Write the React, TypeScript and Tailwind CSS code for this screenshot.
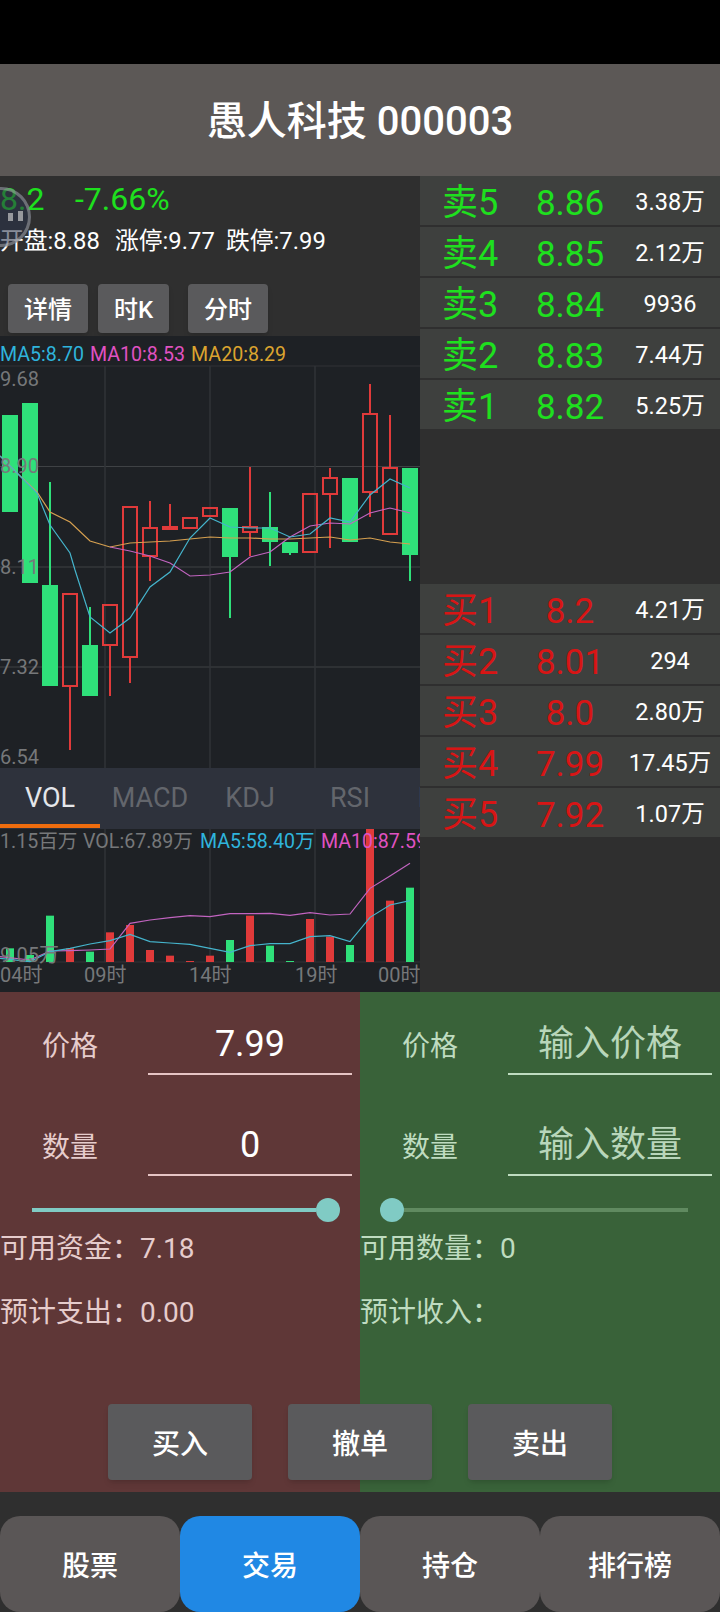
import React from "react";

const FONT = "font-[Roboto,'Noto_Sans_CJK_SC',sans-serif]";
const UP = "#e03a3a";
const DOWN = "#2fe07a";

type C = { x: number; o: number; c: number; h?: number; l?: number; up: boolean };
const candles: C[] = [
  { x: 10, o: 415, c: 512, up: false },
  { x: 30, o: 403, c: 583, up: false },
  { x: 50, o: 585, c: 686, h: 482, up: false },
  { x: 70, o: 594, c: 686, l: 750, up: true },
  { x: 90, o: 645, c: 696, h: 607, up: false },
  { x: 110, o: 605, c: 645, l: 696, up: true },
  { x: 130, o: 507, c: 657, l: 683, up: true },
  { x: 150, o: 528, c: 556, h: 501, l: 581, up: true },
  { x: 170, o: 527, c: 529, h: 504, up: true },
  { x: 190, o: 518, c: 528, up: true },
  { x: 210, o: 508, c: 516, up: true },
  { x: 230, o: 508, c: 557, l: 618, up: false },
  { x: 250, o: 527, c: 532, h: 467, l: 556, up: true },
  { x: 270, o: 527, c: 542, h: 492, l: 566, up: false },
  { x: 290, o: 542, c: 553, l: 555, up: false },
  { x: 310, o: 494, c: 552, up: true },
  { x: 330, o: 478, c: 494, h: 468, l: 548, up: true },
  { x: 350, o: 478, c: 542, up: false },
  { x: 370, o: 414, c: 492, h: 384, l: 517, up: true },
  { x: 390, o: 468, c: 534, h: 415, up: true },
  { x: 410, o: 468, c: 555, l: 581, up: false },
];

const ma20 = "0,456 17,473 37,492 50,512 70,522 90,541 110,547 130,543 150,542 170,541 190,539 210,537 230,538 250,538 270,539 290,539 310,538 330,537 350,540 370,538 390,542 410,544";
const ma5 = "0,456 17,473 37,493 50,525 70,553 75,570 90,617 110,633 130,618 150,587 170,572 190,538 210,518 230,527 250,528 270,528 290,537 310,534 330,518 350,522 370,495 390,479 410,488";
const ma10 = "110,547 130,551 150,556 170,563 190,576 210,575 230,572 250,557 270,552 290,537 310,526 330,523 350,524 370,513 390,508 410,513";

const volTops = [565, 585, 467, 565, 575, 517, 495, 570, 587, 603, 587, 540, 467, 557, 603, 477, 530, 555, 203, 422, 383];
const volZ = (z: number) => 760 + z / 3;
const volUp = [false, false, false, true, false, true, true, true, true, true, true, false, true, false, false, true, true, false, true, true, false];
const pts = (a: number[][]) => a.map(([x, y]) => `${x / 3},${volZ(y)}`).join(" ");
const volMa10 = pts([[0, 590], [90, 600], [150, 573], [210, 572], [270, 570], [330, 567], [390, 490], [450, 480], [510, 473], [570, 467], [630, 470], [690, 461], [750, 461], [810, 460], [870, 466], [930, 458], [990, 465], [1050, 462], [1110, 385], [1170, 348], [1230, 310]]);
const volMa5 = pts([[0, 595], [90, 605], [150, 575], [210, 565], [270, 552], [330, 542], [390, 523], [450, 545], [510, 549], [570, 553], [630, 565], [690, 577], [750, 557], [810, 551], [870, 551], [930, 530], [990, 527], [1050, 545], [1110, 472], [1170, 435], [1230, 422]]);

function PriceChart() {
  return (
    <div className="relative h-[432px] overflow-hidden bg-[#1e2125]">
      <svg className="block" width="420" height="432" viewBox="0 336 420 432">
        {[366, 466.5, 567, 667].map((y) => (
          <line key={y} x1="0" x2="420" y1={y} y2={y} stroke={y === 366 ? "#303337" : "#3f4245"} strokeWidth="1" />
        ))}
        {[105, 210, 315].map((x) => (
          <line key={x} x1={x} x2={x} y1="366" y2="768" stroke="#303337" strokeWidth="1.5" />
        ))}
        {candles.map((k) => {
          const col = k.up ? UP : DOWN;
          return (
            <g key={k.x}>
              {k.h !== undefined && <line x1={k.x} x2={k.x} y1={k.h} y2={k.o} stroke={col} strokeWidth="2" />}
              {k.l !== undefined && <line x1={k.x} x2={k.x} y1={k.c} y2={k.l} stroke={col} strokeWidth="2" />}
              {k.up ? (
                <rect x={k.x - 7} y={k.o} width="14" height={k.c - k.o} fill="none" stroke={col} strokeWidth="2" />
              ) : (
                <rect x={k.x - 8} y={k.o} width="16" height={k.c - k.o} fill={col} />
              )}
            </g>
          );
        })}
        <polyline points={ma20} fill="none" stroke="#d6a050" strokeWidth="1.2" />
        <polyline points={ma10} fill="none" stroke="#c264c0" strokeWidth="1.2" />
        <polyline points={ma5} fill="none" stroke="#45b4cc" strokeWidth="1.2" />
      </svg>
      <div className="absolute left-0 top-[6px] flex gap-[6px] whitespace-nowrap text-[19.6px] leading-[26px]">
        <span className="text-[#2fb4dc]">MA5:8.70</span>
        <span className="text-[#e052c2]">MA10:8.53</span>
        <span className="text-[#dba42f]">MA20:8.29</span>
      </div>
      {[["9.68", 43], ["8.90", 130], ["8.11", 231], ["7.32", 331], ["6.54", 421]].map(([t, y]) => (
        <span key={t} className="absolute left-0 -translate-y-1/2 text-[20px] leading-[24px] text-[#76787a]" style={{ top: Number(y) }}>
          {t}
        </span>
      ))}
    </div>
  );
}

function Tabs() {
  const names = ["VOL", "MACD", "KDJ", "RSI", "BOLL"];
  return (
    <div className="relative flex h-[61px] w-[420px] overflow-hidden bg-[#2e323c]">
      {names.map((n, i) => (
        <div key={n} className={`flex h-[61px] w-[100px] shrink-0 items-center justify-center pb-[1px] text-[27px] ${i === 0 ? "text-[#e4e6ea]" : "text-[#63666c]"}`}>
          {n}
        </div>
      ))}
      <div className="absolute bottom-[1px] left-0 h-1 w-[100px] bg-[#ee6c0e]" />
    </div>
  );
}

function VolChart() {
  return (
    <div className="relative h-[163px] overflow-hidden bg-[#1e2125]">
      <svg className="block" width="420" height="163" viewBox="0 829 420 163">
        {[105, 210, 315].map((x) => (
          <line key={x} x1={x} x2={x} y1="829" y2="962" stroke="#303337" strokeWidth="1.5" />
        ))}
        <line x1="0" x2="420" y1="962" y2="962" stroke="#303337" strokeWidth="1" />
        {volTops.map((t, i) => {
          const x = 10 + i * 20;
          const y = volZ(t);
          return <rect key={x} x={x - 4} y={y} width="8" height={962 - y} fill={volUp[i] ? UP : DOWN} />;
        })}
        <polyline points={volMa10} fill="none" stroke="#c264c0" strokeWidth="1.2" />
        <polyline points={volMa5} fill="none" stroke="#45b4cc" strokeWidth="1.2" />
      </svg>
      <div className="absolute left-0 top-0 flex w-[520px] whitespace-nowrap text-[19.6px] leading-[26px]">
        <span className="w-[83px] text-[#76787a]">1.15百万</span>
        <span className="w-[117px] text-[#76787a]">VOL:67.89万</span>
        <span className="w-[121px] text-[#2fb4dc]">MA5:58.40万</span>
        <span className="text-[#e052c2]">MA10:87.59万</span>
      </div>
      <span className="absolute left-0 top-[113px] text-[20px] leading-[26px] text-[#76787a]">9.05万</span>
      <div className="absolute bottom-[4px] left-0 h-[26px] w-[420px] whitespace-nowrap text-[20px] leading-[26px] text-[#76787a]">
        <span className="absolute left-0">04时</span>
        <span className="absolute left-[84px]">09时</span>
        <span className="absolute left-[189px]">14时</span>
        <span className="absolute left-[295px]">19时</span>
        <span className="absolute left-[378px]">00时</span>
      </div>
    </div>
  );
}

function OrderRow({ label, price, vol, color }: { label: string; price: string; vol: string; color: string }) {
  return (
    <div className="flex h-[49px] items-center bg-[#3e403e]">
      <div className={`w-[100px] pt-[5px] text-center text-[36px] leading-[49px] ${color}`}>{label}</div>
      <div className={`w-[100px] pt-[6px] text-center text-[35px] leading-[49px] ${color}`}>{price}</div>
      <div className="w-[100px] whitespace-nowrap pt-[4px] text-center text-[23.5px] leading-[49px] text-white">{vol}</div>
    </div>
  );
}

function Side({
  text,
  line,
  values,
  valueClass,
  thumbLeft,
  avail,
  est,
}: {
  text: string;
  line: string;
  values: string[];
  valueClass: string;
  thumbLeft: boolean;
  avail: string;
  est: string;
}) {
  const rows = ["价格", "数量"];
  return (
    <div className={`w-[360px] ${text}`}>
      <div className="flex flex-col gap-[49px] pt-[31px]">
        {rows.map((r, i) => (
          <div key={r} className="flex h-[52px] items-center">
            <div className="ml-[42px] w-[56px] whitespace-nowrap pb-[5px] text-[28px] leading-[40px]">{r}</div>
            <div className={`ml-[50px] flex h-[52px] w-[204px] items-center justify-center border-b-2 pb-[8px] text-[36px] ${line} ${valueClass}`}>
              {values[i]}
            </div>
          </div>
        ))}
      </div>
      {thumbLeft ? (
        <div className="mt-[22px] flex h-6 items-center pl-[20px]">
          <div className="h-6 w-6 shrink-0 rounded-full bg-[#80cbc4]" />
          <div className="h-1 w-[284px] bg-[#608a60]" />
        </div>
      ) : (
        <div className="mt-[22px] flex h-6 items-center pl-[32px]">
          <div className="h-1 w-[284px] bg-[#80cbc4]" />
          <div className="h-6 w-6 shrink-0 rounded-full bg-[#80cbc4]" />
        </div>
      )}
      <div className="mt-[7px] flex flex-col gap-[24px] whitespace-nowrap text-[28px] leading-[40px]">
        <div>{avail}</div>
        <div>{est}</div>
      </div>
    </div>
  );
}

export default function App() {
  const sells = [
    ["卖5", "8.86", "3.38万"],
    ["卖4", "8.85", "2.12万"],
    ["卖3", "8.84", "9936"],
    ["卖2", "8.83", "7.44万"],
    ["卖1", "8.82", "5.25万"],
  ];
  const buys = [
    ["买1", "8.2", "4.21万"],
    ["买2", "8.01", "294"],
    ["买3", "8.0", "2.80万"],
    ["买4", "7.99", "17.45万"],
    ["买5", "7.92", "1.07万"],
  ];
  const btn = "flex items-center justify-center rounded-[4px] bg-[#5a5a5c] font-medium text-white shadow-md";
  return (
    <div className={`flex h-[1612px] w-[720px] flex-col overflow-hidden bg-[#2f2f2f] ${FONT}`}>
      <div className="h-16 bg-black" />
      <div className="flex h-[112px] items-center justify-center bg-[#5c5856] pt-[4px] text-[40px] font-medium text-white">
        愚人科技 000003
      </div>

      <div className="flex h-[816px]">
        <div className="relative w-[420px] shrink-0">
          <div className="flex h-[46px] items-center text-[32px] leading-[46px] text-[#1ee01e]">
            <span className="w-[75px]">8.2</span>
            <span>-7.66%</span>
          </div>
          <div className="flex h-10 items-center whitespace-nowrap text-[23.8px] text-white">
            <span className="w-[115px]">开盘:8.88</span>
            <span className="w-[111px]">涨停:9.77</span>
            <span>跌停:7.99</span>
          </div>
          <div className="mt-[22px] flex h-[49px] pt-0 text-[24px]">
            <div className={`ml-2 w-20 pt-[2px] ${btn}`}>详情</div>
            <div className={`ml-[10px] w-[71px] pt-[2px] ${btn}`}>时K</div>
            <div className={`ml-[19px] w-20 pt-[2px] ${btn}`}>分时</div>
          </div>
          <div className="h-[3px]" />
          <PriceChart />
          <Tabs />
          <VolChart />
          <div className="absolute left-[-29px] top-[11px] h-[60px] w-[60px] rounded-full border-[3px] border-[#bfbfbf70] bg-[#2a344a90]">
            <div className="absolute left-[34px] top-[23px] h-2 w-[5px] bg-[#c8c8c8b0]" />
            <div className="absolute left-[44px] top-[21px] h-[10px] w-[5px] bg-[#c8c8c8b0]" />
          </div>
        </div>

        <div className="flex w-[300px] flex-col">
          <div className="flex flex-col gap-[2px]">
            {sells.map((r) => (
              <OrderRow key={r[0]} label={r[0]} price={r[1]} vol={r[2]} color="text-[#1ee01e]" />
            ))}
          </div>
          <div className="mt-[155px] flex flex-col gap-[2px]">
            {buys.map((r) => (
              <OrderRow key={r[0]} label={r[0]} price={r[1]} vol={r[2]} color="text-[#d81515]" />
            ))}
          </div>
        </div>
      </div>

      <div className="flex h-[500px] flex-col bg-[linear-gradient(to_right,#5f3737_50%,#396239_50%)]">
        <div className="flex">
          <Side
            text="text-[#e6cccc]"
            line="border-[#e6c4c4]"
            values={["7.99", "0"]}
            valueClass="text-white"
            thumbLeft={false}
            avail="可用资金：7.18"
            est="预计支出：0.00"
          />
          <Side
            text="text-[#bfdcc0]"
            line="border-[#bfdcc0]"
            values={["输入价格", "输入数量"]}
            valueClass="text-[#b8d6ba]"
            thumbLeft={true}
            avail="可用数量：0"
            est="预计收入："
          />
        </div>
        <div className="mt-[71px] flex justify-center gap-9 text-[28px]">
          <div className={`h-[76px] w-[144px] pt-[6px] ${btn}`}>买入</div>
          <div className={`h-[76px] w-[144px] pt-[6px] ${btn}`}>撤单</div>
          <div className={`h-[76px] w-[144px] pt-[6px] ${btn}`}>卖出</div>
        </div>
      </div>

      <div className="mt-6 flex h-24 text-[28px] font-medium text-white">
        <div className="flex w-[180px] items-center justify-center rounded-[20px] bg-[#5a5656] pt-[6px]">股票</div>
        <div className="flex w-[180px] items-center justify-center rounded-[20px] bg-[#2088e4] pt-[6px]">交易</div>
        <div className="flex w-[180px] items-center justify-center rounded-[20px] bg-[#5a5656] pt-[6px]">持仓</div>
        <div className="flex w-[180px] items-center justify-center rounded-[20px] bg-[#5a5656] pt-[6px]">排行榜</div>
      </div>
    </div>
  );
}
